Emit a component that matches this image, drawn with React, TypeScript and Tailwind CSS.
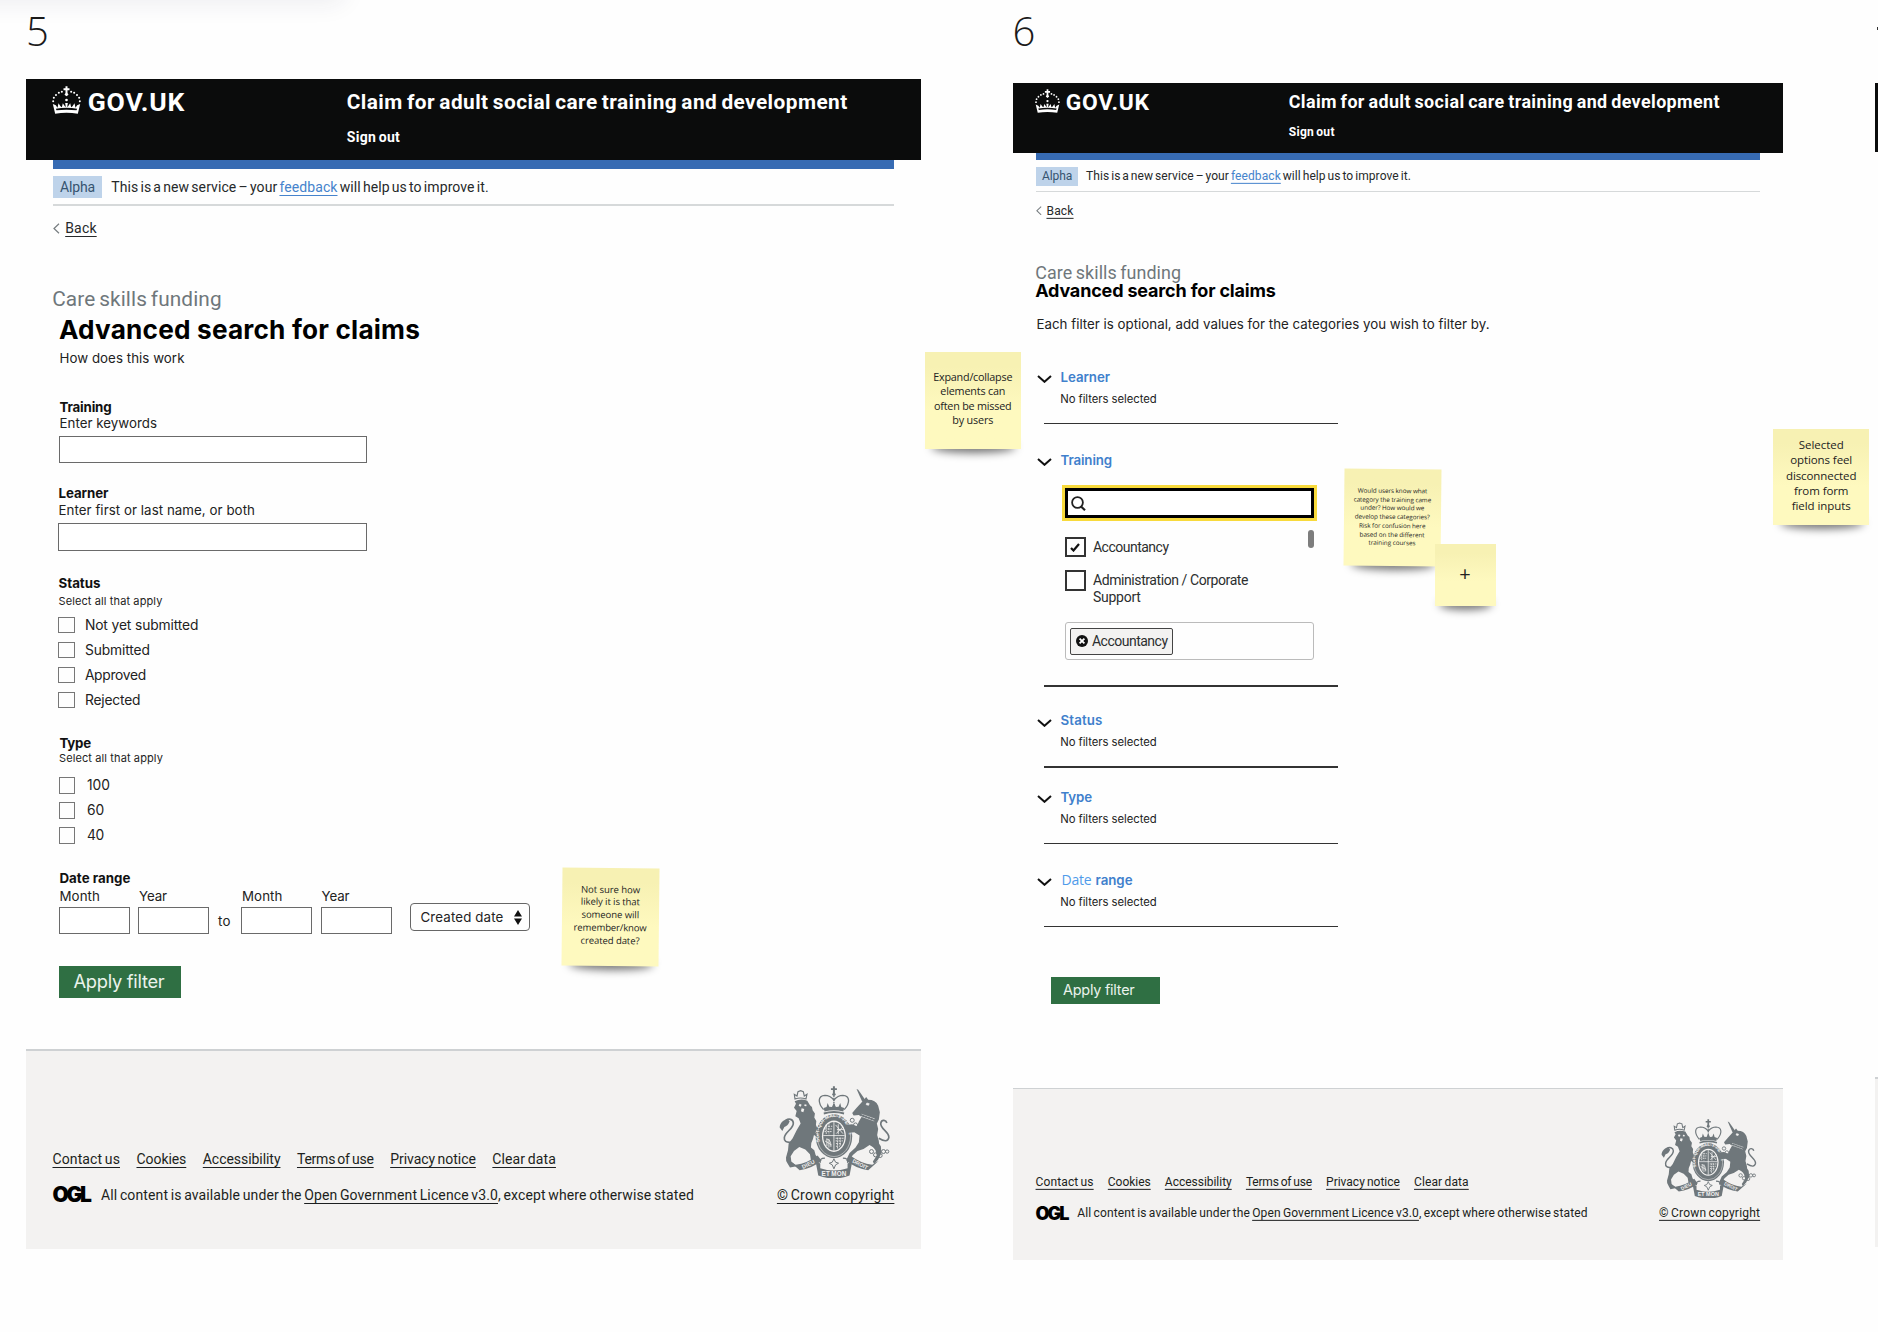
import { useLayoutEffect, useRef, type ReactNode } from "react";
import { clsx } from "clsx";

/** One line of text tracked so that it spans exactly `w` pixels. */
function Fit({ w, className, underline, children }: { w: number; className?: string; underline?: boolean; children: ReactNode }) {
  const outer = useRef<HTMLSpanElement>(null);
  const inner = useRef<HTMLSpanElement>(null);
  useLayoutEffect(() => {
    const o = outer.current;
    const i = inner.current;
    if (!o || !i) return;
    i.style.letterSpacing = "0px";
    const natural = (i.getBoundingClientRect().width / o.getBoundingClientRect().width) * w;
    const count = i.textContent?.length ?? 1;
    i.style.letterSpacing = `${(w - natural) / count}px`;
  }, [w]);
  return (
    <span ref={outer} className={clsx("block shrink-0 whitespace-nowrap", className)} style={{ width: w }}>
      <span ref={inner} className={clsx("inline-block", underline && "underline underline-offset-[3px]")}>
        {children}
      </span>
    </span>
  );
}

function Crown() {
  return (
    <svg viewBox="158 255 86 84" className="mt-[7px] h-[28px] w-[29px] shrink-0" fill="#fff">
      <path d="M198 256h6v6h6v6h-6v8l3 5-6 5-6-5 3-5v-8h-6v-6h6z" />
      <circle cx="187" cy="272" r="3.1" />
      <circle cx="178" cy="275.500" r="3.1" />
      <circle cx="169.500" cy="282" r="3.1" />
      <circle cx="163" cy="290.500" r="3.1" />
      <circle cx="161" cy="301" r="3" />
      <circle cx="215" cy="272" r="3.1" />
      <circle cx="224" cy="275.500" r="3.1" />
      <circle cx="232.500" cy="282" r="3.1" />
      <circle cx="239" cy="290.500" r="3.1" />
      <circle cx="241" cy="301" r="3" />
      <circle cx="201" cy="297" r="4" />
      <path d="M160 309l9 4 5 7 3-13 6 9 4 3 3-12 6 9 3 2-2-12h8l-2 12 3-2 6-9 3 12 4-3 6-9 3 13 5-7 9-4-7 29q-34-5-68 0zM169 323l2 5q30-4 60 0l2-5q-32-5-64 0z" fillRule="evenodd" />
    </svg>
  );
}

function Arms() {
  return (
    <svg viewBox="88 75 338 278" className="ml-[2px] h-[92.500px] w-[112.500px]" fill="#6f777b">
      {/* central crown */}
      <path d="M250 76h6v6h6v5h-6v9h-6v-9h-6v-5h6z" />
      <circle cx="253" cy="100" r="5" />
      <g fill="none" stroke="#6f777b" strokeWidth="4">
        <path d="M222 146c-18-20-18-42 4-43 14 0 22 8 27 14 5-6 13-14 27-14 22 1 22 23 4 43" />
        <path d="M253 104v38" strokeDasharray="4 2" />
      </g>
      <path d="M222 141l9-3 3-12 5 11 8 1 6-13 6 13 8-1 5-11 3 12 9 3-3 11q-28-8-56 0zM222 155q31-10 62 0l-1 6q-30-9-60 0z" />
      {/* shield and garter */}
      <ellipse cx="253" cy="226" rx="55" ry="66" />
      <ellipse cx="253" cy="226" rx="50" ry="61" fill="none" stroke="#f3f2f1" strokeWidth="1.500" />
      <ellipse cx="253" cy="226" rx="36" ry="47" fill="#f3f2f1" />
      <path id="garter" d="M214 248A45 53 0 1 1 292 248" fill="none" />
      <text fontFamily="Liberation Sans" fontWeight="700" fontSize="15" fill="#f3f2f1">
        <textPath href="#garter" startOffset="6">SOIT·QUI·MAL·Y·PENSE</textPath>
      </text>
      <ellipse cx="253" cy="226" rx="32" ry="43" />
      <g stroke="#f3f2f1" strokeWidth="2.500" fill="none">
        <path d="M253 183v86M221 224h64" />
        <path d="M228 196h20M226 204h22M225 212h23M230 190v30M238 186v34" strokeDasharray="5 3" />
        <path d="M258 192l22 26M280 198l-20 20M262 206h20M266 190v30" />
        <path d="M230 234q14 0 14 24M232 234v22M238 234v26M226 240l20 12" />
        <path d="M258 232h24M258 240h22M259 248h18M259 256h12M264 230v34M272 230v26" strokeDasharray="6 3" />
      </g>
      {/* lion */}
      <path d="M136 114l-2-14 8 5 3-13 8-3 8 3 3 13 8-5-3 14q-16-6-33 0z" fill="none" stroke="#6f777b" strokeWidth="3.500" />
      <path d="M135 121q18-9 38-2l8 14 6 5 2 10 7 10-2 12 6 10-1 12 4 10-5 12 5 14-10-6-3 12q-8 14-6 26l10 8 4 14 6 8-6 8h-14l-3-18-14-14-18-8-16 12-10 16 2 16 16 14-20 4-6-10q-8-10-6-20l6-22 2-20 12-16 12-24 12-20-6-16-10-6 4-16-8-10 6-12z" />
      <path d="M150 128l6 3-3 6-6-3zM165 130l6 1-1 5-6-1zM156 142l8 2-3 10-7-3z" fill="#f3f2f1" />
      <path d="M124 244q-22 2-20-14c2-18 28-26 27-44-1-12-14-14-22-8" fill="none" stroke="#6f777b" strokeWidth="5" />
      <path d="M90 200c0-14 12-24 24-26l6 8q-6 14-16 16l-6 12z" />
      {/* unicorn */}
      <path d="M321 84l5 2 22 32-10 4z" />
      <path d="M342 118l8-10 6 8q22 0 30 18l5 20-3 22-6 12 4 16-3 18 5 18 2 24-14-2-16-10-18 12-18 6-14 12-12 18-6-6 8-18 18-16 10-16 2-20-16-10-20 2-10-14 2-10 22-2 14 6 6-14 8-14-8-6-16 2-4-8 12-14z" />
      <path d="M352 126l7 2-2 5-7-2zM336 160l40 14M334 166l40 14" fill="#f3f2f1" stroke="#f3f2f1" strokeWidth="2" />
      <path d="M330 160l46 18" fill="none" stroke="#6f777b" strokeWidth="5" strokeDasharray="6 3" />
      <path d="M388 232q26 16 30-2c2-18-28-26-24-44 3-12 16-8 18 0" fill="none" stroke="#6f777b" strokeWidth="5" />
      <path d="M380 236l14 20 2 20-10 20-12 14-4-8 12-18-4-16-16-22z" />
      <g fill="none" stroke="#6f777b" strokeWidth="3">
        <circle cx="366" cy="272" r="6" />
        <circle cx="378" cy="282" r="6" />
        <circle cx="392" cy="284" r="6" />
        <circle cx="402" cy="272" r="6" />
        <circle cx="413" cy="272" r="5" />
        <circle cx="308" cy="178" r="6" />
        <circle cx="318" cy="192" r="6" />
        <circle cx="312" cy="206" r="6" />
      </g>
      {/* motto scroll */}
      <path d="M118 300l20 12q34-4 66-28l12 16q-30 24-66 28zM388 300l-20 12q-34-4-66-28l-12 16q30 24 66 28z" />
      <path d="M198 302l14 6v14q40 14 82 0v-14l14-6-8 42q-46 18-94 0z" />
      <path d="M212 306q-4-14 14-14M294 306q4-14-14-14" fill="none" stroke="#6f777b" strokeWidth="4" />
      <path d="M253 294l5 10 9 3-9 5-5 12-5-12-9-5 9-3z" fill="#f3f2f1" stroke="#6f777b" strokeWidth="3" />
      <g fontFamily="Liberation Sans" fontWeight="700" fill="#f3f2f1" textAnchor="middle">
        <text x="253" y="345" fontSize="19" textLength="74">ET MON</text>
        <text x="176" y="316" fontSize="17" transform="rotate(-26 176 310)">DIEU</text>
        <text x="332" y="316" fontSize="16" transform="rotate(26 332 310)">DROIT</text>
      </g>
    </svg>
  );
}

function ServiceHeader() {
  return (
    <div className="h-[232px] font-[Roboto,sans-serif] text-sm leading-4 text-[#26292a] [word-spacing:-0.1em]">
      <header className="flex h-[80.500px] bg-[#0b0c0c] pl-[26.500px] text-white">
        <Crown />
        <Fit w={97.5} className="mt-[8.500px] ml-[6.500px] text-[26.500px] leading-7 font-bold">GOV.UK</Fit>
        <div className="ml-[161.500px] pt-[10.500px]">
          <Fit w={501} className="text-[20.800px] leading-6 font-bold">Claim for adult social care training and development</Fit>
          <Fit w={53.5} className="mt-[15.500px] font-bold">Sign out</Fit>
        </div>
      </header>
      <div className="mx-[27px] h-[9px] bg-[#376bb3]" />
      <div className="mx-[27px] mt-[7.500px] flex items-center border-b-2 border-[#d6d9da] pb-[6px]">
        <div className="flex h-[22px] w-[49.500px] items-center justify-center bg-[#bed3ea] text-[#36536f]">
          <Fit w={35}>Alpha</Fit>
        </div>
        <Fit w={377.5} className="ml-[9px]">
          This is a new service – your{" "}
          <span className="text-[#4583cc] underline underline-offset-[3px]">feedback</span> will help us to improve it.
        </Fit>
      </div>
      <div className="mt-[14px] flex items-center pl-[27px]">
        <svg viewBox="0 0 7 11" className="h-[11px] w-[7px]" fill="none" stroke="#777d80" strokeWidth="1.200">
          <path d="M6 .7L1 5.500l5 4.800" />
        </svg>
        <Fit w={31.5} underline className="ml-[5.500px]">Back</Fit>
      </div>
      <Fit w={169.5} className="mt-[51.200px] ml-[26.500px] text-[20.800px] leading-6 text-[#6f777b]">Care skills funding</Fit>
    </div>
  );
}

const footerLinks = [
  { label: "Contact us", w: 67.5 },
  { label: "Cookies", w: 49.8 },
  { label: "Accessibility", w: 77.7 },
  { label: "Terms of use", w: 76.7 },
  { label: "Privacy notice", w: 85.7 },
  { label: "Clear data", w: 63.6 },
];

function ServiceFooter() {
  return (
    <footer className="flex h-[200px] justify-between border-t-2 border-[#ced1d3] bg-[#f3f2f1] px-[26.800px] font-[Roboto,sans-serif] text-sm leading-4 text-[#1c1f20] [word-spacing:-0.07em]">
      <div className="pt-[100.500px]">
        <div className="flex gap-[16.500px]">
          {footerLinks.map((l) => (
            <Fit key={l.label} w={l.w} underline>{l.label}</Fit>
          ))}
        </div>
        <div className="mt-5 flex items-center">
          <Fit w={37} className="mr-[11.500px] font-[Inter,sans-serif] text-[21px] font-black text-black">OGL</Fit>
          <Fit w={593}>
            All content is available under the{" "}
            <span className="underline underline-offset-[3px]">Open Government Licence v3.0</span>, except where otherwise stated
          </Fit>
        </div>
      </div>
      <div className="pt-[35px]">
        <Arms />
        <Fit w={117.5} underline className="mt-[9px]">© Crown copyright</Fit>
      </div>
    </footer>
  );
}

function TextBox({ className }: { className: string }) {
  return <div className={clsx("h-[27.500px] border border-[#6a6a6a] bg-white", className)} />;
}

function Checks({ items, gap, className }: { items: { label: string; w: number }[]; gap: string; className: string }) {
  return (
    <div className={clsx("flex flex-col gap-[8.500px]", className)}>
      {items.map((i) => (
        <div key={i.label} className={clsx("flex h-[16.500px] items-center text-[13.800px]", gap)}>
          <span className="size-[16.500px] border border-[#777]" />
          <Fit w={i.w}>{i.label}</Fit>
        </div>
      ))}
    </div>
  );
}

function DatePart({ label, w }: { label: string; w: number }) {
  return (
    <div className="w-[71px]">
      <Fit w={w} className="mb-[2.500px] ml-[.5px]">{label}</Fit>
      <TextBox className="w-full" />
    </div>
  );
}

function SearchFormBoard() {
  return (
    <section className="absolute top-[79px] left-[25.700px] flex h-[1169.500px] w-[895.500px] flex-col">
      <ServiceHeader />
      <div className="pl-[33.300px] text-[13.300px] leading-4 text-[#222]">
        <Fit w={361} className="mt-[3px] text-[26.200px] leading-8 font-bold text-black">Advanced search for claims</Fit>
        <Fit w={125} className="mt-1 ml-[.5px]">How does this work</Fit>

        <Fit w={52} className="mt-[32.500px] ml-[.5px] font-bold text-[#111]">Training</Fit>
        <Fit w={97.5} className="ml-[.5px]">Enter keywords</Fit>
        <TextBox className="mt-[5px] w-[308.500px]" />

        <Fit w={50} className="mt-[21.500px] -ml-[.5px] font-bold text-[#111]">Learner</Fit>
        <Fit w={196.5} className="mt-[1.500px] -ml-[.5px]">Enter first or last name, or both</Fit>
        <TextBox className="mt-[5px] -ml-px w-[309.500px]" />

        <Fit w={42} className="mt-[24.500px] -ml-[.5px] font-bold text-[#111]">Status</Fit>
        <Fit w={104} className="mt-[1.500px] -ml-[.5px] text-[11px]">Select all that apply</Fit>
        <Checks
          className="mt-[8px] -ml-[.6px]"
          gap="gap-[10px]"
          items={[
            { label: "Not yet submitted", w: 113.5 },
            { label: "Submitted", w: 65 },
            { label: "Approved", w: 61 },
            { label: "Rejected", w: 55.5 },
          ]}
        />

        <Fit w={31.5} className="mt-[27px] ml-[.5px] font-bold text-[#111]">Type</Fit>
        <Fit w={104} className="-mt-px text-[11px]">Select all that apply</Fit>
        <Checks
          className="mt-[11.200px]"
          gap="gap-[11.500px]"
          items={[
            { label: "100", w: 23 },
            { label: "60", w: 17 },
            { label: "40", w: 17 },
          ]}
        />

        <Fit w={71} className="mt-[26.500px] ml-[.5px] font-bold text-[#111]">Date range</Fit>
        <div className="mt-[2px] flex items-end">
          <DatePart label="Month" w={40.5} />
          <div className="w-[8.500px]" />
          <DatePart label="Year" w={28} />
          <Fit w={13} className="mr-[10.500px] mb-[5.500px] ml-[8.500px]">to</Fit>
          <DatePart label="Month" w={40.5} />
          <div className="w-[8.500px]" />
          <DatePart label="Year" w={28} />
          <div className="mb-[2.800px] ml-[18.500px] flex h-[28px] w-[120px] items-center justify-between rounded-[4px] border border-[#666] pr-[7px] pl-[9px]">
            <Fit w={83}>Created date</Fit>
            <svg viewBox="0 0 8 15" className="h-[15px] w-[8px]">
              <path d="M4 0l4 6.500H0zM4 15l4-6.500H0z" fill="#111" />
            </svg>
          </div>
        </div>

        <div className="mt-[31.500px] flex h-[32.500px] w-[122px] items-center bg-[#2f6f43] pb-px pl-[14.500px] text-[18.300px] text-[#eaf3ec]">
          <Fit w={91}>Apply filter</Fit>
        </div>
      </div>
      <div className="mt-auto">
        <ServiceFooter />
      </div>
    </section>
  );
}

function Section({ title, className, children }: { title: ReactNode; className: string; children?: ReactNode }) {
  return (
    <div className={className}>
      <div className="flex gap-[9px]">
        <svg viewBox="0 0 15 8" className="mt-[6.500px] ml-[.3px] h-[8px] w-[15px]" fill="none" stroke="#111" strokeWidth="2">
          <path d="M1 1l6.500 5.800L14 1" />
        </svg>
        <div className="-ml-[.3px] text-[13.300px] font-semibold text-[#4080cc]">{title}</div>
      </div>
      {children ?? <Fit w={96.5} className="mt-[6px] mb-4 ml-[23.700px] text-[11.300px]">No filters selected</Fit>}
      <div className="ml-[7.500px] h-[1.500px] w-[294px] bg-[#333]" />
    </div>
  );
}

function FilterBoard() {
  return (
    <section className="absolute top-[83.300px] left-[1012.500px] flex h-[1176.500px] w-[770.700px] flex-col">
      <div className="[zoom:0.8606] [&_header_span.block]:translate-y-0 [&_span.block]:translate-y-px">
        <ServiceHeader />
      </div>
      <div className="pl-[24px] text-[13.300px] leading-4 text-[#222]">
        <Fit w={240.5} className="-mt-[2.300px] -ml-[1.300px] text-[18px] leading-5 font-bold text-black">Advanced search for claims</Fit>
        <Fit w={453} className="mt-[15.500px]">Each filter is optional, add values for the categories you wish to filter by.</Fit>

        <Section className="mt-[36.500px]" title={<Fit w={49.5}>Learner</Fit>} />
        <Section className="mt-[27.500px]" title={<Fit w={51.5}>Training</Fit>}>
          <div className="ml-[25.500px] flex h-[217.500px] flex-col pt-[17.800px] font-[Roboto,sans-serif] text-[14px] leading-4 text-[#2c2e2f]">
            <div className="h-[35.500px] w-[255px] shrink-0 border-[3.500px] border-[#f8da3c]">
              <div className="flex h-full items-center border-[3.500px] border-black bg-white pl-[3px]">
                <svg viewBox="0 0 15 15" className="size-[15px]" fill="none" stroke="#222" strokeWidth="1.800">
                  <circle cx="6.500" cy="6.500" r="5.400" />
                  <path d="M9.800 10.200l4.200 4" strokeWidth="2.200" />
                </svg>
              </div>
            </div>
            <div className="relative mt-[16px] ml-[3px] flex gap-[7.500px]">
              <span className="flex size-[20.500px] items-center justify-center border-2 border-[#333]">
                <svg viewBox="0 0 10 9" className="h-[9px] w-[10px]" fill="none" stroke="#111" strokeWidth="2.200">
                  <path d="M1 5l2.500 2.500L9 1" />
                </svg>
              </span>
              <Fit w={75.5} className="mt-[2.500px]">Accountancy</Fit>
              <span className="absolute -top-[7px] left-[243px] h-[18px] w-[5.500px] rounded-full bg-[#7d7d7d]" />
            </div>
            <div className="mt-[12.800px] ml-[3px] flex h-[34px] gap-[7.500px]">
              <span className="size-[20.500px] border-2 border-[#333]" />
              <div className="mt-[2px] leading-[17px]">
                <Fit w={155}>Administration / Corporate</Fit>
                <Fit w={47.500}>Support</Fit>
              </div>
            </div>
            <div className="mt-[18px] ml-[3px] flex h-[38px] w-[249px] shrink-0 items-center rounded-[3px] border border-[#bbb] pl-[4px]">
              <div className="flex h-[26.500px] w-[103px] items-center gap-[4px] rounded-[2px] border border-[#444] bg-[#f3f2f1] pl-[5px]">
                <svg viewBox="0 0 12 12" className="size-[12px]">
                  <circle cx="6" cy="6" r="6" fill="#111" />
                  <path d="M3.600 3.600l4.800 4.800M8.400 3.600L3.600 8.400" stroke="#fff" strokeWidth="1.800" />
                </svg>
                <Fit w={75.5}>Accountancy</Fit>
              </div>
            </div>
          </div>
        </Section>
        <Section className="mt-[25.500px]" title={<Fit w={42}>Status</Fit>} />
        <Section className="mt-[21px]" title={<Fit w={31.5}>Type</Fit>} />
        <Section
          className="mt-[27.500px]"
          title={
            <span className="flex gap-[4px] pl-px">
              <Fit w={30} className="font-['Open_Sans',sans-serif] text-[14px] leading-4 font-normal text-[#4f9bea]">Date</Fit>
              <Fit w={37}>range</Fit>
            </span>
          }
        />
        <div className="mt-[49.500px] ml-[14px] flex h-[27px] w-[109px] items-center bg-[#2f6f43] pb-px pl-[12.500px] text-[14.400px] text-[#eaf3ec]">
          <Fit w={71.5}>Apply filter</Fit>
        </div>
      </div>
      <div className="mt-auto [zoom:0.8606] [&_span.block]:translate-y-px">
        <ServiceFooter />
      </div>
    </section>
  );
}

function Note({ className, lines }: { className: string; lines: { text: string; w: number }[] }) {
  return (
    <div className={clsx("absolute font-['Open_Sans',sans-serif] text-[#222]", className)}>
      <div className="absolute right-[5%] -bottom-[4px] left-[7%] h-[12px] rounded-[50%] bg-black/55 blur-[4px]" />
      <div className="relative flex h-full flex-col items-center justify-center bg-linear-to-b from-[#f7f1b3] from-15% to-[#fef9bf] to-60%">
        {lines.map((l) => (
          <Fit key={l.text} w={l.w}>{l.text}</Fit>
        ))}
      </div>
    </div>
  );
}

export default function App() {
  return (
    <main className="relative h-[1332px] w-[1878px] overflow-hidden bg-[#fefefe] font-[Inter,sans-serif]">
      <div className="absolute -top-[30px] -left-10 h-[30px] w-[385px] rounded-xl shadow-[0_3px_24px_rgba(40,40,80,0.08)]" />

      <h2 className="absolute top-[4px] left-[26px] font-['Open_Sans',sans-serif] text-[40px] leading-[54px] font-[360] text-[#1a1a1a]">5</h2>
      <h2 className="absolute top-[4px] left-[1012.500px] font-['Open_Sans',sans-serif] text-[40px] leading-[54px] font-[360] text-[#1a1a1a]">6</h2>
      <div className="absolute top-[27px] left-[1876.500px] h-[3px] w-[2px] bg-[#333]" />

      <SearchFormBoard />
      <FilterBoard />

      <section className="absolute top-[83.300px] left-[1875px] flex h-[1163.700px] w-[770px] flex-col justify-between">
        <div className="h-[69px] bg-[#0b0c0c]" />
        <div className="h-[170px] border-t-2 border-[#ced1d3] bg-[#f3f2f1]" />
      </section>

      <Note
        className="top-[868px] left-[561.700px] h-[97.500px] w-[96.500px] rotate-[.6deg] text-[9.500px] leading-[12.850px] [&>div]:pb-[2px]"
        lines={[
          { text: "Not sure how", w: 59 },
          { text: "likely it is that", w: 59 },
          { text: "someone will", w: 57.5 },
          { text: "remember/know", w: 73 },
          { text: "created date?", w: 59 },
        ]}
      />
      <Note
        className="top-[352px] left-[924.500px] h-[97px] w-[96.500px] text-[10.800px] leading-[14.400px] [&>div]:pb-[4px]"
        lines={[
          { text: "Expand/collapse", w: 79 },
          { text: "elements can", w: 65 },
          { text: "often be missed", w: 77.5 },
          { text: "by users", w: 41 },
        ]}
      />
      <Note
        className="top-[469px] left-[1344px] h-[97px] w-[96.500px] rotate-[.6deg] text-[6.300px] leading-[8.750px]"
        lines={[
          { text: "Would users know what", w: 69.5 },
          { text: "category the training came", w: 77.5 },
          { text: "under? How would we", w: 64 },
          { text: "develop these categories?", w: 75 },
          { text: "Risk for confusion here", w: 66.5 },
          { text: "based on the different", w: 65 },
          { text: "training courses", w: 47 },
        ]}
      />
      <Note
        className="top-[544px] left-[1434.500px] h-[62px] w-[61px] text-[20px] leading-[22px] [&>div]:pb-[2px]"
        lines={[{ text: "+", w: 11.5 }]}
      />
      <Note
        className="top-[428.500px] left-[1773.200px] h-[96.500px] w-[96px] text-[11.500px] leading-[15.400px] [&>div]:pb-[3px]"
        lines={[
          { text: "Selected", w: 45 },
          { text: "options feel", w: 62 },
          { text: "disconnected", w: 70.5 },
          { text: "from form", w: 54.5 },
          { text: "field inputs", w: 59 },
        ]}
      />
    </main>
  );
}
